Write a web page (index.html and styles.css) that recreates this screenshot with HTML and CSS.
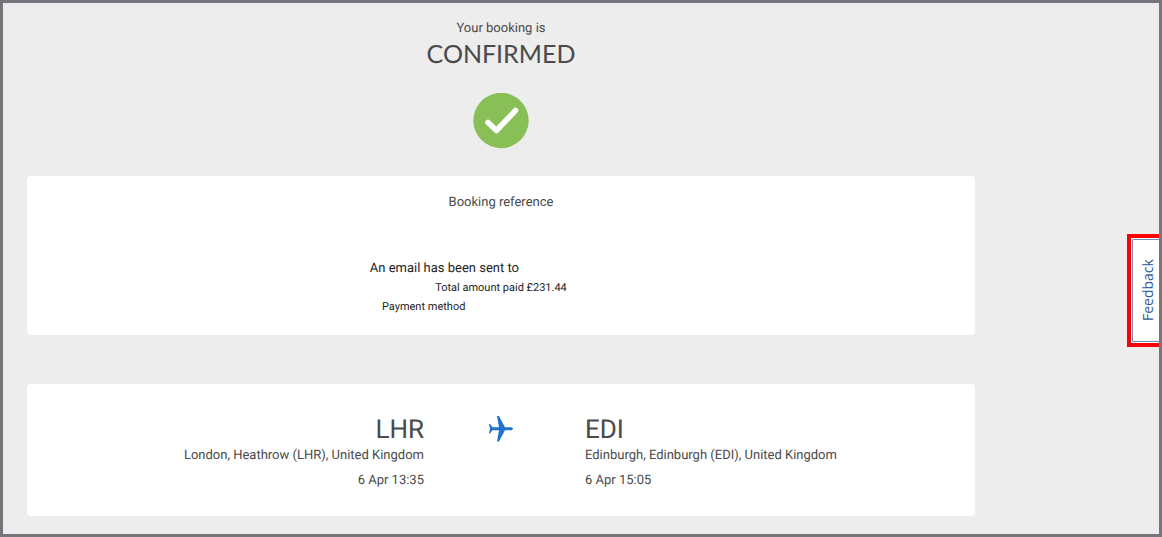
FILE: index.html
```
<!DOCTYPE html>
<html lang="en">
<head>
    <meta charset="UTF-8">
    <title>Booking confirmed</title>
    <link rel="stylesheet" href="styles.css">
</head>
<body>

    <main class="l-wrapper">
        <header class="status">
            <h1 class="status__title">
                <span class="status__intro">Your booking is</span>
                <span class="status__state">CONFIRMED</span>
            </h1>
            <svg class="status__icon" viewBox="0 0 56 56" aria-hidden="true">
                <circle cx="28" cy="27.500" r="27.700" fill="#88C057"/>
                <path d="M15 29.500L23.500 37.500L42.500 17.500" fill="none" stroke="#FFF" stroke-width="5.500" stroke-linecap="round" stroke-linejoin="round"/>
            </svg>
        </header>

        <section class="card booking">
            <h2 class="booking__title">Booking reference</h2>
            <p class="booking__email">An email has been sent to <span class="booking__address"></span></p>
            <p class="booking__line">Total amount paid £231.44</p>
            <p class="booking__line">Payment method <span class="booking__method"></span></p>
        </section>

        <section class="card flight">
            <div class="airport airport--from">
                <h2 class="airport__code">LHR</h2>
                <p class="airport__text">London, Heathrow (LHR), United Kingdom</p>
                <p class="airport__text">6 Apr 13:35</p>
            </div>
            <svg class="flight__icon" viewBox="0 0 26 26" aria-hidden="true">
                <path d="M9 0h2l5 9.500 1 1.800h5c2 0 3 .7 3 1.500s-1 1.500-3 1.500h-5l-1 1.800L11 25.500H9l2-11.200H4.500L2 17.500H1L2 12.800 1 8h1l2.500 3.300H11z" fill="#2372CE"/>
            </svg>
            <div class="airport airport--to">
                <h2 class="airport__code">EDI</h2>
                <p class="airport__text">Edinburgh, Edinburgh (EDI), United Kingdom</p>
                <p class="airport__text">6 Apr 15:05</p>
            </div>
        </section>
    </main>

    <div class="feedback">
        <button type="button" class="feedback__button">Feedback</button>
    </div>

</body>
</html>
```
FILE: styles.css
```
* {
    box-sizing: border-box;
    }
BODY {
    position: relative;
    min-height: 100vh;
    margin: 0;
    border: 3px solid #77757C;
    background: #EDEDED;
    font: 13px/20px Roboto, sans-serif;
    color: #4A4A4A;
    text-rendering: geometricPrecision;
    }
H1, H2, P {
    margin: 0;
    font-weight: normal;
    }
.l-wrapper {
    padding: 16px 184px 18px 24px;
    }
.card {
    border-radius: 4px;
    background: #FFF;
    }
.status {
    display: flex;
    flex-direction: column;
    align-items: center;
    gap: 24px;
    margin-bottom: 27px;
    text-align: center;
    }
.status__title {
    font-size: 13px;
    }
.status__intro,
.status__state {
    display: block;
    }
.status__state {
    font: 25px/30px Lato, sans-serif;
    }
.status__icon {
    width: 56px;
    height: 56px;
    }
.booking {
    margin-bottom: 49px;
    padding: 17px 16px 19px;
    text-align: center;
    }
.booking__title {
    margin-bottom: 46px;
    font-size: 13px;
    }
.booking__email,
.booking__line {
    line-height: 19px;
    color: #1E1E1E;
    }
.booking__line {
    font-size: 11px;
    }
.booking__address,
.booking__method {
    display: inline-block;
    }
.booking__address {
    width: 110px;
    }
.booking__method {
    width: 152px;
    }
.flight {
    display: grid;
    grid-template-columns: 1fr 26px 1fr;
    column-gap: 64px;
    padding: 30px 16px 25px;
    }
.flight__icon {
    width: 26px;
    height: 26px;
    margin-top: 2px;
    }
.airport--from {
    text-align: right;
    }
.airport--to {
    padding-left: 7px;
    }
.airport__code {
    font-size: 26px;
    line-height: 32px;
    }
.airport__text + .airport__text {
    margin-top: 5px;
    }
/* Vertical tab on the right edge */
.feedback {
    position: absolute;
    top: 231px;
    right: 0;
    padding: 1px 0 1px 1px;
    border: 4px solid #F00;
    border-right: 0;
    background: #FFF;
    }
/* turned by 180deg, so its left side is drawn on the right */
.feedback__button {
    display: block;
    width: 27px;
    height: 103px;
    padding: 0 4px 0 0;
    border: 1px solid #6C8EC1;
    border-left: 0;
    border-radius: 0 2px 2px 0;
    background: #FFF;
    font: 14px/20px "Open Sans", sans-serif;
    color: #2E5C9E;
    writing-mode: vertical-rl;
    transform: rotate(180deg);
    }
```
